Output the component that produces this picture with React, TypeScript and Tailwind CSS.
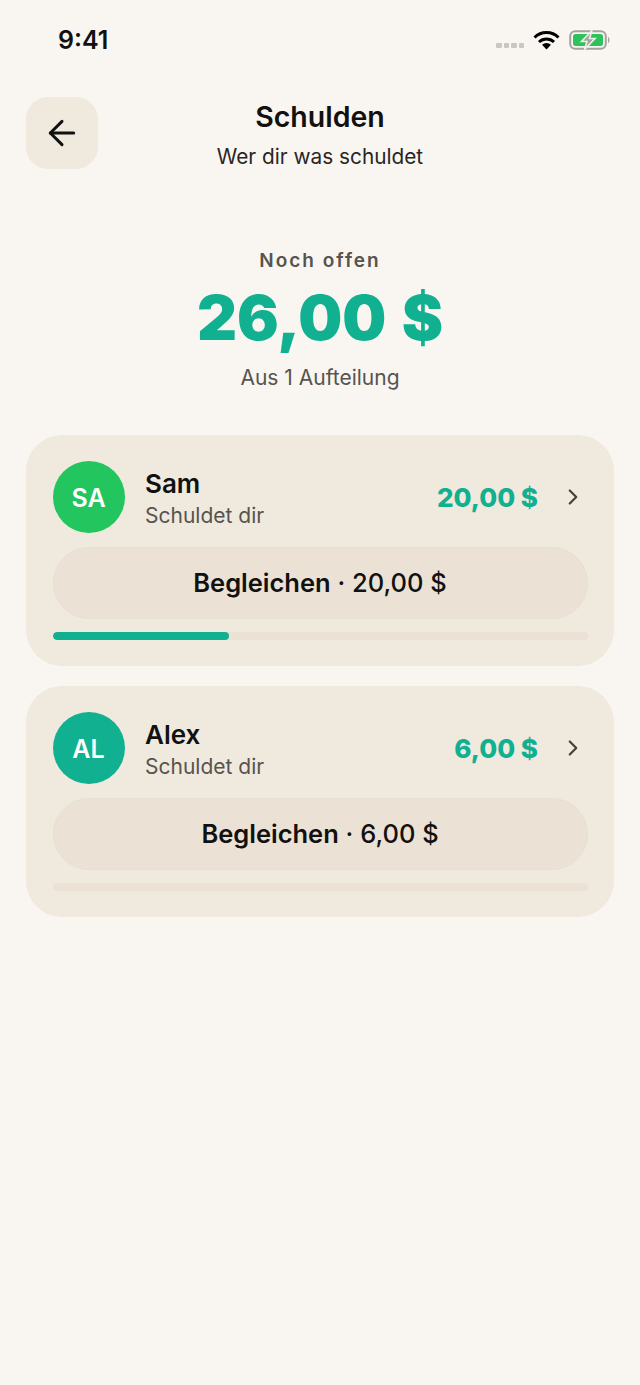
import React from 'react';
import { ArrowLeft, ChevronRight } from 'lucide-react';

const DEBTS = [
  { id: 'sam', initials: 'SA', name: 'Sam', amount: '20,00 $', avatar: 'bg-[#22c55e]', progress: 33 },
  { id: 'alex', initials: 'AL', name: 'Alex', amount: '6,00 $', avatar: 'bg-[#10b090]', progress: 0 },
];

const StatusBar: React.FC = () => (
  <div className="h-[97px] shrink-0 flex items-start justify-between pl-[58px] pr-[29px] pt-[26px]">
    <span className="text-[25px] leading-[28px] font-semibold text-[#111]">9:41</span>
    <div className="flex items-center pt-[3px]">
      <div className="flex gap-[2px] mr-[9px] mt-[10px]">
        <div className="w-[5.5px] h-[5px] rounded-[1px] bg-[#c9c7c3]"></div>
        <div className="w-[5.5px] h-[5px] rounded-[1px] bg-[#c9c7c3]"></div>
        <div className="w-[5.5px] h-[5px] rounded-[1px] bg-[#c9c7c3]"></div>
        <div className="w-[5.5px] h-[5px] rounded-[1px] bg-[#c9c7c3]"></div>
      </div>
      <svg width="27" height="20" viewBox="0 0 27 20" className="mr-[9px]">
        <path d="M1.5 7.5 A17 17 0 0 1 25.5 7.5" fill="none" stroke="#000" strokeWidth="3" />
        <path d="M6 12 A11 11 0 0 1 21 12" fill="none" stroke="#000" strokeWidth="3" />
        <path d="M13.5 19.5 L9 14.8 A6.5 6.5 0 0 1 18 14.8 Z" fill="#000" />
      </svg>
      <svg width="42" height="22" viewBox="0 0 42 22">
        <rect x="1.2" y="2.2" width="35.6" height="17.6" rx="5" fill="none" stroke="#a3a29e" strokeWidth="2" />
        <rect x="4" y="5" width="30" height="12" rx="2.5" fill="#2ec25f" />
        <path d="M39 8 C41 8.5 41 13.5 39 14 Z" fill="#a3a29e" />
        <path d="M23 1.5 L12.5 12.5 H18 L15.5 20.5 L26 9.5 H20.5 Z" fill="#a3a29e" stroke="#f2efe8" strokeWidth="1.6" />
      </svg>
    </div>
  </div>
);

const DebtCard: React.FC<{ debt: (typeof DEBTS)[number] }> = ({ debt }) => (
  <div className="rounded-[36px] bg-[#efe9de] p-[26px] flex flex-col">
    <div className="flex items-center">
      <div className={`w-[72px] h-[72px] ml-[0.5px] rounded-full flex items-center justify-center text-white text-[25px] leading-[30px] font-semibold pt-[1px] ${debt.avatar}`}>
        {debt.initials}
      </div>
      <div className="ml-[20.5px] flex-1 pt-[3px]">
        <div className="text-[26px] leading-[32px] font-semibold text-[#111]">{debt.name}</div>
        <div className="text-[21px] leading-[28px] mt-[2px] text-[#57534e]">Schuldet dir</div>
      </div>
      <span className="text-[26px] font-extrabold text-[#10b090]">{debt.amount}</span>
      <ChevronRight className="w-[26px] h-[26px] ml-[22px] mr-[2px] text-[#44403c]" strokeWidth={2} />
    </div>
    <button className="mt-[14px] mx-[0.5px] h-[72px] rounded-full bg-[#ebe2d5] border border-[#e7dfd1] text-[25.5px] font-medium text-[#111]">
      <span className="font-semibold">Begleichen</span> · {debt.amount}
    </button>
    <div className="mt-[13px] mx-[0.5px] h-[8px] rounded-full bg-[#ebe2d5] overflow-hidden">
      <div className="h-full rounded-full bg-[#10b090]" style={{ width: `${debt.progress}%` }}></div>
    </div>
  </div>
);

export default function App() {
  return (
    <div className="min-h-[1385px] bg-[#f9f6f1] flex flex-col font-['Inter',sans-serif]">
      <StatusBar />

      <div className="relative px-[26px] h-[72px] text-center">
        <button className="absolute left-[26px] top-0 w-[72px] h-[72px] rounded-[22px] bg-[#efe9de] flex items-center justify-center text-[#111]">
          <ArrowLeft className="w-[40px] h-[40px]" strokeWidth={1.8} />
        </button>
        <div className="text-[28.5px] leading-[40px] font-semibold text-[#111]">Schulden</div>
        <div className="text-[20.8px] leading-[28px] mt-[6px] text-[#292524]">Wer dir was schuldet</div>
      </div>

      <div className="mt-[80px] text-center">
        <div className="text-[19px] leading-[24px] font-semibold tracking-[2px] text-[#57534e]">Noch offen</div>
        <div className="text-[62px] leading-[72px] mt-[9px] font-black [word-spacing:3px] text-[#10b090]">26,00 $</div>
        <div className="text-[21px] leading-[28px] mt-[10px] text-[#57534e]">Aus 1 Aufteilung</div>
      </div>

      <div className="mt-[43px] px-[26px] flex flex-col gap-[20px]">
        {DEBTS.map(debt => (
          <DebtCard key={debt.id} debt={debt} />
        ))}
      </div>
    </div>
  );
}
